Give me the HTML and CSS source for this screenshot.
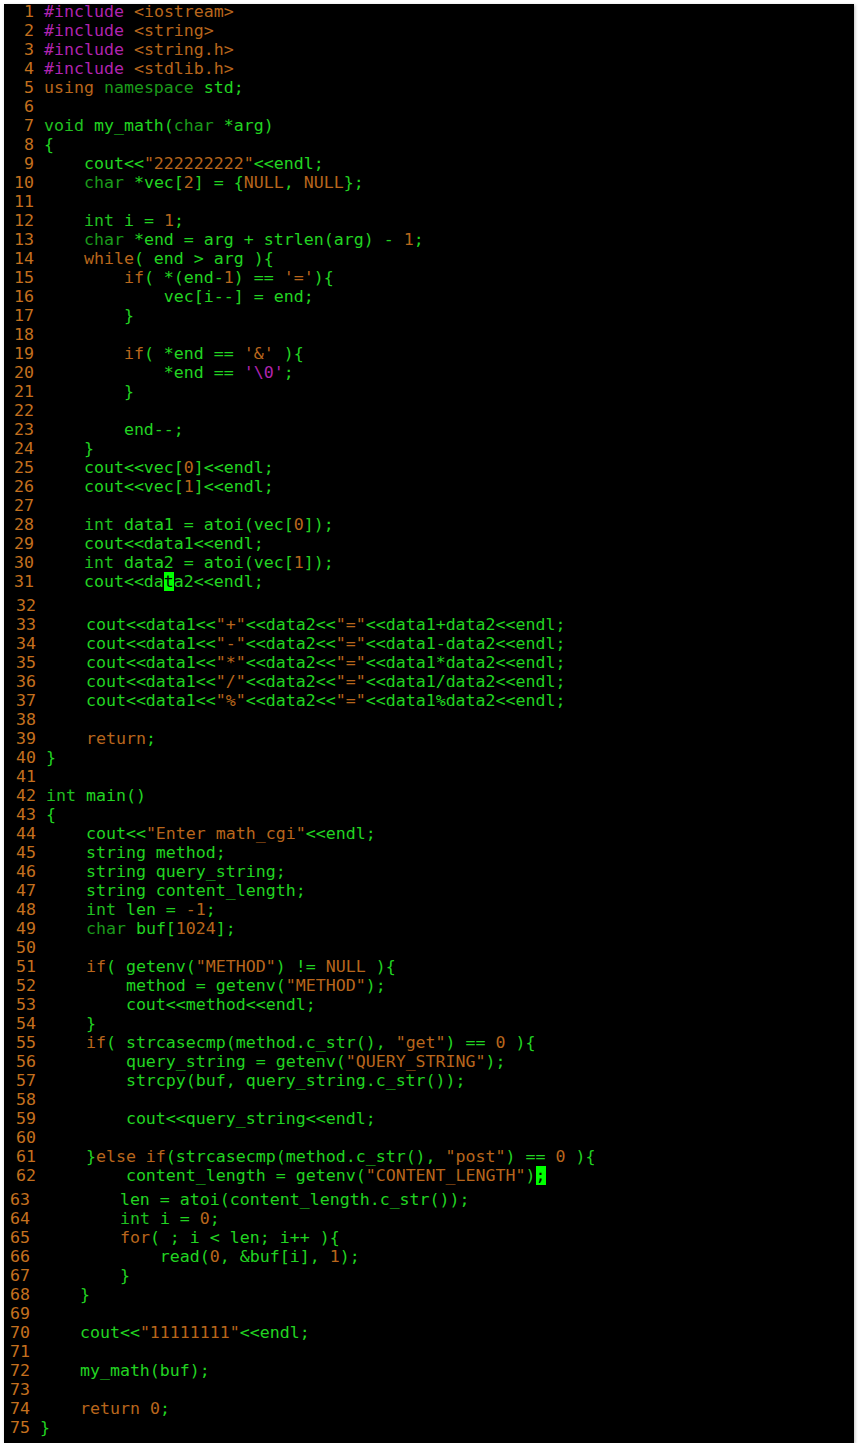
FILE: index.html
```html
<!DOCTYPE html>
<html>
<head>
<meta charset="utf-8">
<link rel="stylesheet" href="styles.css">
</head>
<body>
<div class="term">
<div class="sec s1">
<div class="l"><span class="n">  1 </span><span class="p">#include</span> <span class="o">&lt;iostream&gt;</span></div>
<div class="l"><span class="n">  2 </span><span class="p">#include</span> <span class="o">&lt;string&gt;</span></div>
<div class="l"><span class="n">  3 </span><span class="p">#include</span> <span class="o">&lt;string.h&gt;</span></div>
<div class="l"><span class="n">  4 </span><span class="p">#include</span> <span class="o">&lt;stdlib.h&gt;</span></div>
<div class="l"><span class="n">  5 </span><span class="o">using</span> <span class="d">namespace</span> std;</div>
<div class="l"><span class="n">  6 </span></div>
<div class="l"><span class="n">  7 </span><span class="t">void</span> my_math(<span class="d">char</span> *arg)</div>
<div class="l"><span class="n">  8 </span>{</div>
<div class="l"><span class="n">  9 </span>    cout&lt;&lt;<span class="o">"222222222"</span>&lt;&lt;endl;</div>
<div class="l"><span class="n"> 10 </span>    <span class="d">char</span> *vec[<span class="o">2</span>] = {<span class="o">NULL</span>, <span class="o">NULL</span>};</div>
<div class="l"><span class="n"> 11 </span></div>
<div class="l"><span class="n"> 12 </span>    <span class="t">int</span> i = <span class="o">1</span>;</div>
<div class="l"><span class="n"> 13 </span>    <span class="d">char</span> *end = arg + strlen(arg) - <span class="o">1</span>;</div>
<div class="l"><span class="n"> 14 </span>    <span class="o">while</span>( end &gt; arg ){</div>
<div class="l"><span class="n"> 15 </span>        <span class="o">if</span>( *(end-<span class="o">1</span>) == <span class="o">'='</span>){</div>
<div class="l"><span class="n"> 16 </span>            vec[i--] = end;</div>
<div class="l"><span class="n"> 17 </span>        }</div>
<div class="l"><span class="n"> 18 </span></div>
<div class="l"><span class="n"> 19 </span>        <span class="o">if</span>( *end == <span class="o">'&amp;'</span> ){</div>
<div class="l"><span class="n"> 20 </span>            *end == <span class="p">'\0'</span>;</div>
<div class="l"><span class="n"> 21 </span>        }</div>
<div class="l"><span class="n"> 22 </span></div>
<div class="l"><span class="n"> 23 </span>        end--;</div>
<div class="l"><span class="n"> 24 </span>    }</div>
<div class="l"><span class="n"> 25 </span>    cout&lt;&lt;vec[<span class="o">0</span>]&lt;&lt;endl;</div>
<div class="l"><span class="n"> 26 </span>    cout&lt;&lt;vec[<span class="o">1</span>]&lt;&lt;endl;</div>
<div class="l"><span class="n"> 27 </span></div>
<div class="l"><span class="n"> 28 </span>    <span class="t">int</span> data1 = atoi(vec[<span class="o">0</span>]);</div>
<div class="l"><span class="n"> 29 </span>    cout&lt;&lt;data1&lt;&lt;endl;</div>
<div class="l"><span class="n"> 30 </span>    <span class="t">int</span> data2 = atoi(vec[<span class="o">1</span>]);</div>
<div class="l"><span class="n"> 31 </span>    cout&lt;&lt;da<span class="c">t</span>a2&lt;&lt;endl;</div>
</div>
<div class="sec s2">
<div class="l"><span class="n"> 32 </span></div>
<div class="l"><span class="n"> 33 </span>    cout&lt;&lt;data1&lt;&lt;<span class="o">"+"</span>&lt;&lt;data2&lt;&lt;<span class="o">"="</span>&lt;&lt;data1+data2&lt;&lt;endl;</div>
<div class="l"><span class="n"> 34 </span>    cout&lt;&lt;data1&lt;&lt;<span class="o">"-"</span>&lt;&lt;data2&lt;&lt;<span class="o">"="</span>&lt;&lt;data1-data2&lt;&lt;endl;</div>
<div class="l"><span class="n"> 35 </span>    cout&lt;&lt;data1&lt;&lt;<span class="o">"*"</span>&lt;&lt;data2&lt;&lt;<span class="o">"="</span>&lt;&lt;data1*data2&lt;&lt;endl;</div>
<div class="l"><span class="n"> 36 </span>    cout&lt;&lt;data1&lt;&lt;<span class="o">"/"</span>&lt;&lt;data2&lt;&lt;<span class="o">"="</span>&lt;&lt;data1/data2&lt;&lt;endl;</div>
<div class="l"><span class="n"> 37 </span>    cout&lt;&lt;data1&lt;&lt;<span class="o">"%"</span>&lt;&lt;data2&lt;&lt;<span class="o">"="</span>&lt;&lt;data1%data2&lt;&lt;endl;</div>
<div class="l"><span class="n"> 38 </span></div>
<div class="l"><span class="n"> 39 </span>    <span class="o">return</span>;</div>
<div class="l"><span class="n"> 40 </span>}</div>
<div class="l"><span class="n"> 41 </span></div>
<div class="l"><span class="n"> 42 </span><span class="t">int</span> main()</div>
<div class="l"><span class="n"> 43 </span>{</div>
<div class="l"><span class="n"> 44 </span>    cout&lt;&lt;<span class="o">"Enter math_cgi"</span>&lt;&lt;endl;</div>
<div class="l"><span class="n"> 45 </span>    string method;</div>
<div class="l"><span class="n"> 46 </span>    string query_string;</div>
<div class="l"><span class="n"> 47 </span>    string content_length;</div>
<div class="l"><span class="n"> 48 </span>    <span class="t">int</span> len = <span class="o">-1</span>;</div>
<div class="l"><span class="n"> 49 </span>    <span class="d">char</span> buf[<span class="o">1024</span>];</div>
<div class="l"><span class="n"> 50 </span></div>
<div class="l"><span class="n"> 51 </span>    <span class="o">if</span>( getenv(<span class="o">"METHOD"</span>) != <span class="o">NULL</span> ){</div>
<div class="l"><span class="n"> 52 </span>        method = getenv(<span class="o">"METHOD"</span>);</div>
<div class="l"><span class="n"> 53 </span>        cout&lt;&lt;method&lt;&lt;endl;</div>
<div class="l"><span class="n"> 54 </span>    }</div>
<div class="l"><span class="n"> 55 </span>    <span class="o">if</span>( strcasecmp(method.c_str(), <span class="o">"get"</span>) == <span class="o">0</span> ){</div>
<div class="l"><span class="n"> 56 </span>        query_string = getenv(<span class="o">"QUERY_STRING"</span>);</div>
<div class="l"><span class="n"> 57 </span>        strcpy(buf, query_string.c_str());</div>
<div class="l"><span class="n"> 58 </span></div>
<div class="l"><span class="n"> 59 </span>        cout&lt;&lt;query_string&lt;&lt;endl;</div>
<div class="l"><span class="n"> 60 </span></div>
<div class="l"><span class="n"> 61 </span>    }<span class="o">else if</span>(strcasecmp(method.c_str(), <span class="o">"post"</span>) == <span class="o">0</span> ){</div>
<div class="l"><span class="n"> 62 </span>        content_length = getenv(<span class="o">"CONTENT_LENGTH"</span>)<span class="c">;</span></div>
</div>
<div class="sec s3">
<div class="l"><span class="n"> 63 </span>        len = atoi(content_length.c_str());</div>
<div class="l"><span class="n"> 64 </span>        <span class="t">int</span> i = <span class="o">0</span>;</div>
<div class="l"><span class="n"> 65 </span>        <span class="o">for</span>( ; i &lt; len; i++ ){</div>
<div class="l"><span class="n"> 66 </span>            read(<span class="o">0</span>, &amp;buf[i], <span class="o">1</span>);</div>
<div class="l"><span class="n"> 67 </span>        }</div>
<div class="l"><span class="n"> 68 </span>    }</div>
<div class="l"><span class="n"> 69 </span></div>
<div class="l"><span class="n"> 70 </span>    cout&lt;&lt;<span class="o">"11111111"</span>&lt;&lt;endl;</div>
<div class="l"><span class="n"> 71 </span></div>
<div class="l"><span class="n"> 72 </span>    my_math(buf);</div>
<div class="l"><span class="n"> 73 </span></div>
<div class="l"><span class="n"> 74 </span>    <span class="o">return</span> <span class="o">0</span>;</div>
<div class="l"><span class="n"> 75 </span>}</div>
</div>
</div>
</body>
</html>
```
FILE: styles.css
```css
html, body {
  margin: 0;
  padding: 0;
  background: #ffffff;
}
.term {
  margin: 4px 4px 0 4px;
  width: 850px;
  height: 1439px;
  background: #000000;
  box-shadow: 1px 1px 3px rgba(0, 0, 0, 0.25);
  font-family: "DejaVu Sans Mono", "Liberation Mono", monospace;
  font-size: 16.6px;
  color: #22d422;
}
.sec {
  display: flex;
  flex-direction: column;
}
.s1 {
  margin-top: 0;
  margin-left: 0;
}
.s2 {
  margin-top: 5px;
  margin-left: 2px;
}
.s3 {
  margin-top: 5px;
  margin-left: -4px;
}
.l {
  height: 15px;
  padding-bottom: 4px;
  line-height: 15px;
  white-space: pre;
}
.n { color: #c4701e; }
.o { color: #b8661c; }
.p { color: #b024b0; }
.d { color: #1b9a1b; }
.t { color: #20c020; }
.c { background: #00ff00; color: #000000; }
```
